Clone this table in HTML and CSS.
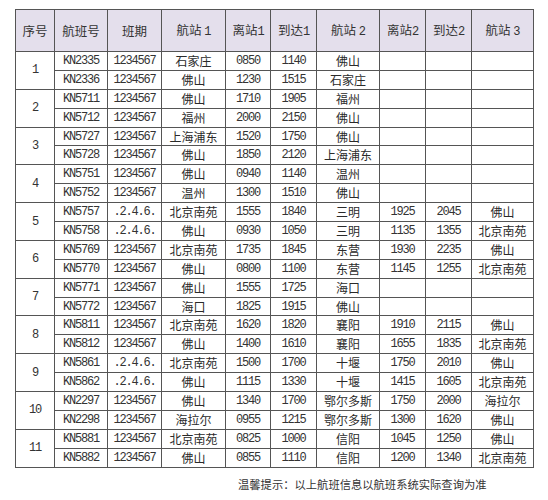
FILE: index.html
```html
<!DOCTYPE html>
<html lang="zh-CN">
<head>
<meta charset="utf-8">
<title>航班时刻表</title>
<link rel="stylesheet" href="styles.css">
</head>
<body>
<div class="page">
<table class="sched">
<colgroup>
<col class="c1"><col class="c2"><col class="c3"><col class="c4"><col class="c5">
<col class="c6"><col class="c7"><col class="c8"><col class="c9"><col class="c10">
</colgroup>
<thead>
<tr>
<th>序号</th><th>航班号</th><th>班期</th><th>航站 <span class="d">1</span></th><th>离站<span class="d">1</span></th>
<th>到达<span class="d">1</span></th><th>航站 <span class="d">2</span></th><th>离站<span class="d">2</span></th><th>到达<span class="d">2</span></th><th>航站 <span class="d">3</span></th>
</tr>
</thead>
<tbody>
<tr><td rowspan="2" class="num">1</td><td class="num">KN2335</td><td class="num">1234567</td><td>石家庄</td><td class="num">0850</td><td class="num">1140</td><td>佛山</td><td></td><td></td><td></td></tr>
<tr><td class="num">KN2336</td><td class="num">1234567</td><td>佛山</td><td class="num">1230</td><td class="num">1515</td><td>石家庄</td><td></td><td></td><td></td></tr>
<tr><td rowspan="2" class="num">2</td><td class="num">KN5711</td><td class="num">1234567</td><td>佛山</td><td class="num">1710</td><td class="num">1905</td><td>福州</td><td></td><td></td><td></td></tr>
<tr><td class="num">KN5712</td><td class="num">1234567</td><td>福州</td><td class="num">2000</td><td class="num">2150</td><td>佛山</td><td></td><td></td><td></td></tr>
<tr><td rowspan="2" class="num">3</td><td class="num">KN5727</td><td class="num">1234567</td><td>上海浦东</td><td class="num">1520</td><td class="num">1750</td><td>佛山</td><td></td><td></td><td></td></tr>
<tr><td class="num">KN5728</td><td class="num">1234567</td><td>佛山</td><td class="num">1850</td><td class="num">2120</td><td>上海浦东</td><td></td><td></td><td></td></tr>
<tr><td rowspan="2" class="num">4</td><td class="num">KN5751</td><td class="num">1234567</td><td>佛山</td><td class="num">0940</td><td class="num">1140</td><td>温州</td><td></td><td></td><td></td></tr>
<tr><td class="num">KN5752</td><td class="num">1234567</td><td>温州</td><td class="num">1300</td><td class="num">1510</td><td>佛山</td><td></td><td></td><td></td></tr>
<tr><td rowspan="2" class="num">5</td><td class="num">KN5757</td><td class="num">.2.4.6.</td><td>北京南苑</td><td class="num">1555</td><td class="num">1840</td><td>三明</td><td class="num">1925</td><td class="num">2045</td><td>佛山</td></tr>
<tr><td class="num">KN5758</td><td class="num">.2.4.6.</td><td>佛山</td><td class="num">0930</td><td class="num">1050</td><td>三明</td><td class="num">1135</td><td class="num">1355</td><td>北京南苑</td></tr>
<tr><td rowspan="2" class="num">6</td><td class="num">KN5769</td><td class="num">1234567</td><td>北京南苑</td><td class="num">1735</td><td class="num">1845</td><td>东营</td><td class="num">1930</td><td class="num">2235</td><td>佛山</td></tr>
<tr><td class="num">KN5770</td><td class="num">1234567</td><td>佛山</td><td class="num">0800</td><td class="num">1100</td><td>东营</td><td class="num">1145</td><td class="num">1255</td><td>北京南苑</td></tr>
<tr><td rowspan="2" class="num">7</td><td class="num">KN5771</td><td class="num">1234567</td><td>佛山</td><td class="num">1555</td><td class="num">1725</td><td>海口</td><td></td><td></td><td></td></tr>
<tr><td class="num">KN5772</td><td class="num">1234567</td><td>海口</td><td class="num">1825</td><td class="num">1915</td><td>佛山</td><td></td><td></td><td></td></tr>
<tr><td rowspan="2" class="num">8</td><td class="num">KN5811</td><td class="num">1234567</td><td>北京南苑</td><td class="num">1620</td><td class="num">1820</td><td>襄阳</td><td class="num">1910</td><td class="num">2115</td><td>佛山</td></tr>
<tr><td class="num">KN5812</td><td class="num">1234567</td><td>佛山</td><td class="num">1400</td><td class="num">1610</td><td>襄阳</td><td class="num">1655</td><td class="num">1835</td><td>北京南苑</td></tr>
<tr><td rowspan="2" class="num">9</td><td class="num">KN5861</td><td class="num">.2.4.6.</td><td>北京南苑</td><td class="num">1500</td><td class="num">1700</td><td>十堰</td><td class="num">1750</td><td class="num">2010</td><td>佛山</td></tr>
<tr><td class="num">KN5862</td><td class="num">.2.4.6.</td><td>佛山</td><td class="num">1115</td><td class="num">1330</td><td>十堰</td><td class="num">1415</td><td class="num">1605</td><td>北京南苑</td></tr>
<tr><td rowspan="2" class="num">10</td><td class="num">KN2297</td><td class="num">1234567</td><td>佛山</td><td class="num">1340</td><td class="num">1700</td><td>鄂尔多斯</td><td class="num">1750</td><td class="num">2000</td><td>海拉尔</td></tr>
<tr><td class="num">KN2298</td><td class="num">1234567</td><td>海拉尔</td><td class="num">0955</td><td class="num">1215</td><td>鄂尔多斯</td><td class="num">1300</td><td class="num">1620</td><td>佛山</td></tr>
<tr><td rowspan="2" class="num">11</td><td class="num">KN5881</td><td class="num">1234567</td><td>北京南苑</td><td class="num">0825</td><td class="num">1000</td><td>信阳</td><td class="num">1045</td><td class="num">1250</td><td>佛山</td></tr>
<tr><td class="num">KN5882</td><td class="num">1234567</td><td>佛山</td><td class="num">0855</td><td class="num">1110</td><td>信阳</td><td class="num">1200</td><td class="num">1340</td><td>北京南苑</td></tr>
</tbody>
</table>
<p class="note">温馨提示：以上航班信息以航班系统实际查询为准</p>
</div>
</body>
</html>
```
FILE: styles.css
```css
html, body {
  margin: 0;
  padding: 0;
  background: #ffffff;
}
.page {
  padding: 9px 0 0 15px;
  font-family: "Noto Sans CJK SC", "Noto Sans", sans-serif;
  color: #222222;
}
.sched {
  border-collapse: collapse;
  table-layout: fixed;
  width: 519px;
}
.c1 { width: 39px; }
.c2 { width: 53px; }
.c3 { width: 54px; }
.c4 { width: 64px; }
.c5 { width: 45px; }
.c6 { width: 46px; }
.c7 { width: 63px; }
.c8 { width: 46px; }
.c9 { width: 46px; }
.c10 { width: 62px; }
.sched th,
.sched td {
  border: 1px solid #555555;
  padding: 0;
  text-align: center;
  vertical-align: middle;
  white-space: nowrap;
  overflow: hidden;
}
.sched thead tr {
  height: 42px;
}
.sched th {
  background: #e4dfec;
  font-weight: normal;
  font-size: 12.5px;
  line-height: 16px;
  color: #333333;
}
.sched th .d {
  font-family: "Liberation Mono", monospace;
  font-size: 12px;
  letter-spacing: -1px;
}
.sched tbody tr {
  height: 18.9px;
}
.sched td {
  font-size: 12px;
  line-height: 14px;
  color: #2a2a2a;
}
.sched td.num {
  font-family: "Liberation Mono", monospace;
  font-size: 12px;
  letter-spacing: -1.2px;
  color: #333333;
}
.note {
  margin: 8px 0 0 223px;
  font-size: 11.3px;
  line-height: 16px;
  color: #333333;
}
```
